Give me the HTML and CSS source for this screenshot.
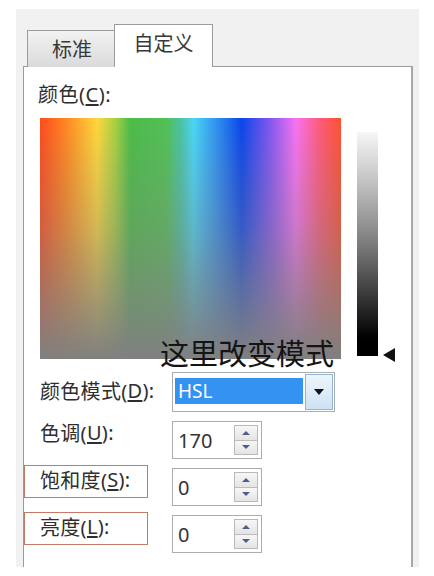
FILE: index.html
```html
<!DOCTYPE html>
<html lang="zh-CN">
<head>
<meta charset="utf-8">
<title>颜色 - 自定义</title>
<link rel="stylesheet" href="styles.css">
</head>
<body>
<div class="dialog">
  <div class="tabs">
    <div class="tab">标准</div>
    <div class="tab active">自定义</div>
  </div>
  <div class="panel">
    <div class="caption">颜色(<u>C</u>):</div>
    <div class="picker">
      <div class="spectrum"></div>
      <div class="lum"></div>
      <div class="lum-arrow"></div>
      <div class="note">这里改变模式</div>
    </div>
    <div class="fields">
      <div class="lbl first">颜色模式(<u>D</u>):</div>
      <div class="combo">
        <div class="sel">HSL</div>
        <div class="drop"><span class="down"></span></div>
      </div>

      <div class="lbl">色调(<u>U</u>):</div>
      <div class="spin">
        <div class="val">170</div>
        <div class="btns"><div class="b"><span class="up"></span></div><div class="b"><span class="dn"></span></div></div>
      </div>

      <div class="lbl mark">饱和度(<u>S</u>):</div>
      <div class="spin">
        <div class="val">0</div>
        <div class="btns"><div class="b"><span class="up"></span></div><div class="b"><span class="dn"></span></div></div>
      </div>

      <div class="lbl mark">亮度(<u>L</u>):</div>
      <div class="spin">
        <div class="val">0</div>
        <div class="btns"><div class="b"><span class="up"></span></div><div class="b"><span class="dn"></span></div></div>
      </div>
    </div>
  </div>
</div>
</body>
</html>
```
FILE: styles.css
```css
html, body {
  margin: 0;
  padding: 0;
  background: #ffffff;
}
body {
  font-family: "Noto Sans", "Noto Sans CJK SC", sans-serif;
  color: #2e2e2e;
}
.dialog {
  margin: 9px 0 0 16px;
  width: 403px;
  height: 558px;
  background: #f1f1f1;
  padding-top: 15px;
  box-sizing: border-box;
  overflow: hidden;
}
.tabs {
  display: flex;
  align-items: flex-end;
  padding-left: 11px;
}
.tab {
  box-sizing: border-box;
  width: 88px;
  height: 37px;
  border: 1px solid #9c9c9c;
  border-bottom: none;
  background: linear-gradient(#f2f2f2, #dadada);
  font-size: 20px;
  line-height: 37px;
  text-align: center;
  color: #383838;
  padding-left: 2px;
}
.tab.active {
  position: relative;
  z-index: 1;
  width: 99px;
  height: 43px;
  margin-left: -1px;
  background: #ffffff;
  line-height: 38px;
  padding-left: 0;
}
.panel {
  margin: -1px 0 0 7px;
  width: 390px;
  height: 501px;
  box-sizing: border-box;
  border: 1px solid #9c9c9c;
  border-right: 2px solid #a8a8a8;
  border-bottom: none;
  background: #ffffff;
  padding-top: 17px;
}
.caption {
  font-size: 20px;
  line-height: 22px;
  padding-left: 14px;
  letter-spacing: 0.5px;
}
.caption u, .lbl u {
  text-underline-offset: 2px;
}
.picker {
  position: relative;
  display: flex;
  align-items: flex-start;
  margin-top: 12px;
  padding-left: 16px;
  height: 241px;
}
.spectrum {
  width: 301px;
  height: 241px;
  background:
    linear-gradient(rgba(128,128,128,0) 0%, rgba(130,128,128,0.35) 45%, rgba(128,128,128,1) 100%),
    linear-gradient(90deg, #ff4a1c 0%, #ff8a22 9%, #ffd83c 19%, #a8d042 25%, #4cbc48 30%, #52c056 42%, #49c4a8 47%, #4ad6f6 51%, #2f8ef0 59%, #0a46ea 67%, #8a58f0 77%, #f872f2 85%, #ff5a7a 93%, #ff5030 100%);
}
.lum {
  margin-left: 16px;
  margin-top: 14px;
  width: 21px;
  height: 224px;
  background: linear-gradient(#f6f6f6 0%, #c8c8c8 20%, #7c7c7c 50%, #2a2a2a 78%, #000000 92%);
}
.lum-arrow {
  margin-left: 5px;
  margin-top: 230px;
  width: 0;
  height: 0;
  border-top: 7px solid transparent;
  border-bottom: 7px solid transparent;
  border-right: 12px solid #111111;
}
.note {
  position: absolute;
  left: 136px;
  top: 218px;
  font-family: "Noto Sans CJK SC", sans-serif;
  font-size: 29px;
  line-height: 32px;
  color: #141414;
  white-space: nowrap;
}
.fields {
  display: grid;
  grid-template-columns: 124px auto;
  column-gap: 24px;
  row-gap: 9px;
  margin-top: 13px;
  justify-content: start;
}
.lbl {
  box-sizing: border-box;
  align-self: start;
  height: 33px;
  margin-top: -3px;
  border: 1.5px solid transparent;
  padding-left: 15px;
  padding-bottom: 5px;
  display: flex;
  align-items: center;
  font-size: 20px;
  letter-spacing: 0.3px;
  white-space: nowrap;
}
.lbl.first {
  margin-top: 4px;
}
.lbl.mark {
  border-color: #c47a66;
}
.combo {
  box-sizing: border-box;
  width: 163px;
  height: 40px;
  border: 1px solid #acacac;
  padding: 1px;
  display: flex;
  background: #ffffff;
}
.sel {
  flex: 1;
  margin: 4px 2px 6px 1px;
  background: #3492f2;
  color: #ffffff;
  font-size: 19px;
  line-height: 26px;
  padding-left: 3px;
}
.drop {
  box-sizing: border-box;
  width: 28px;
  border: 1px solid #8fb4dc;
  background: linear-gradient(#eef5fc, #cde2f6);
  display: flex;
  align-items: center;
  justify-content: center;
}
.down {
  width: 0;
  height: 0;
  border-left: 5px solid transparent;
  border-right: 5px solid transparent;
  border-top: 6px solid #111111;
}
.spin {
  box-sizing: border-box;
  width: 90px;
  height: 38px;
  border: 1px solid #ababab;
  display: flex;
  align-items: center;
  background: #ffffff;
}
.val {
  flex: 1;
  padding-left: 5px;
  font-size: 20px;
  color: #333333;
}
.btns {
  box-sizing: border-box;
  width: 24px;
  height: 30px;
  margin-right: 3px;
  display: flex;
  flex-direction: column;
  border: 1px solid #b9b9b9;
}
.b {
  flex: 1;
  display: flex;
  align-items: center;
  justify-content: center;
  background: linear-gradient(#f7f7f7, #e4e4e4);
}
.b + .b {
  border-top: 1px solid #bcbcbc;
}
.up {
  width: 0;
  height: 0;
  border-left: 4px solid transparent;
  border-right: 4px solid transparent;
  border-bottom: 4px solid #4d5f86;
}
.dn {
  width: 0;
  height: 0;
  border-left: 4px solid transparent;
  border-right: 4px solid transparent;
  border-top: 4px solid #4d5f86;
}
```
